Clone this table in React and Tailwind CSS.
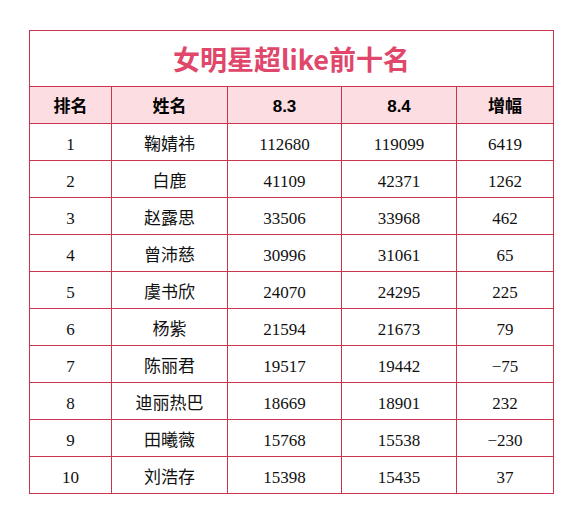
const rows = [
  ["1", "鞠婧祎", "112680", "119099", "6419"],
  ["2", "白鹿", "41109", "42371", "1262"],
  ["3", "赵露思", "33506", "33968", "462"],
  ["4", "曾沛慈", "30996", "31061", "65"],
  ["5", "虞书欣", "24070", "24295", "225"],
  ["6", "杨紫", "21594", "21673", "79"],
  ["7", "陈丽君", "19517", "19442", "−75"],
  ["8", "迪丽热巴", "18669", "18901", "232"],
  ["9", "田曦薇", "15768", "15538", "−230"],
  ["10", "刘浩存", "15398", "15435", "37"],
];

const cjk = "font-['Liberation_Serif','Noto_Sans_CJK_SC',serif]";

export default function App() {
  return (
    <div className="w-[581px] h-[520px] bg-white pt-[30px] pl-[29px]">
      <table className="border-collapse table-fixed">
        <colgroup>
          <col className="w-[82px]" />
          <col className="w-[116px]" />
          <col className="w-[114px]" />
          <col className="w-[115px]" />
          <col className="w-[97px]" />
        </colgroup>
        <tbody>
          <tr>
            <td
              colSpan={5}
              className="h-[56px] p-0 border border-[#c8354c] text-center text-[27px] font-bold text-[#e0476a] font-['Noto_Sans_CJK_SC',sans-serif] leading-none"
            >
              女明星超like前十名
            </td>
          </tr>
          <tr className="bg-[#fbdde2]">
            {["排名", "姓名", "8.3", "8.4", "增幅"].map((h) => (
              <td
                key={h}
                className="h-[37px] p-0 pt-[2px] border border-[#c8354c] text-center text-[17px] font-bold text-black font-['Liberation_Sans','Noto_Sans_CJK_SC',sans-serif] leading-none"
              >
                {h}
              </td>
            ))}
          </tr>
          {rows.map((r) => (
            <tr key={r[0]}>
              {r.map((c, i) => (
                <td
                  key={i}
                  className={`h-[37px] p-0 pt-[4px] border border-[#c8354c] text-center text-[17px] text-[#111] leading-none ${cjk}`}
                >
                  {c}
                </td>
              ))}
            </tr>
          ))}
        </tbody>
      </table>
    </div>
  );
}
